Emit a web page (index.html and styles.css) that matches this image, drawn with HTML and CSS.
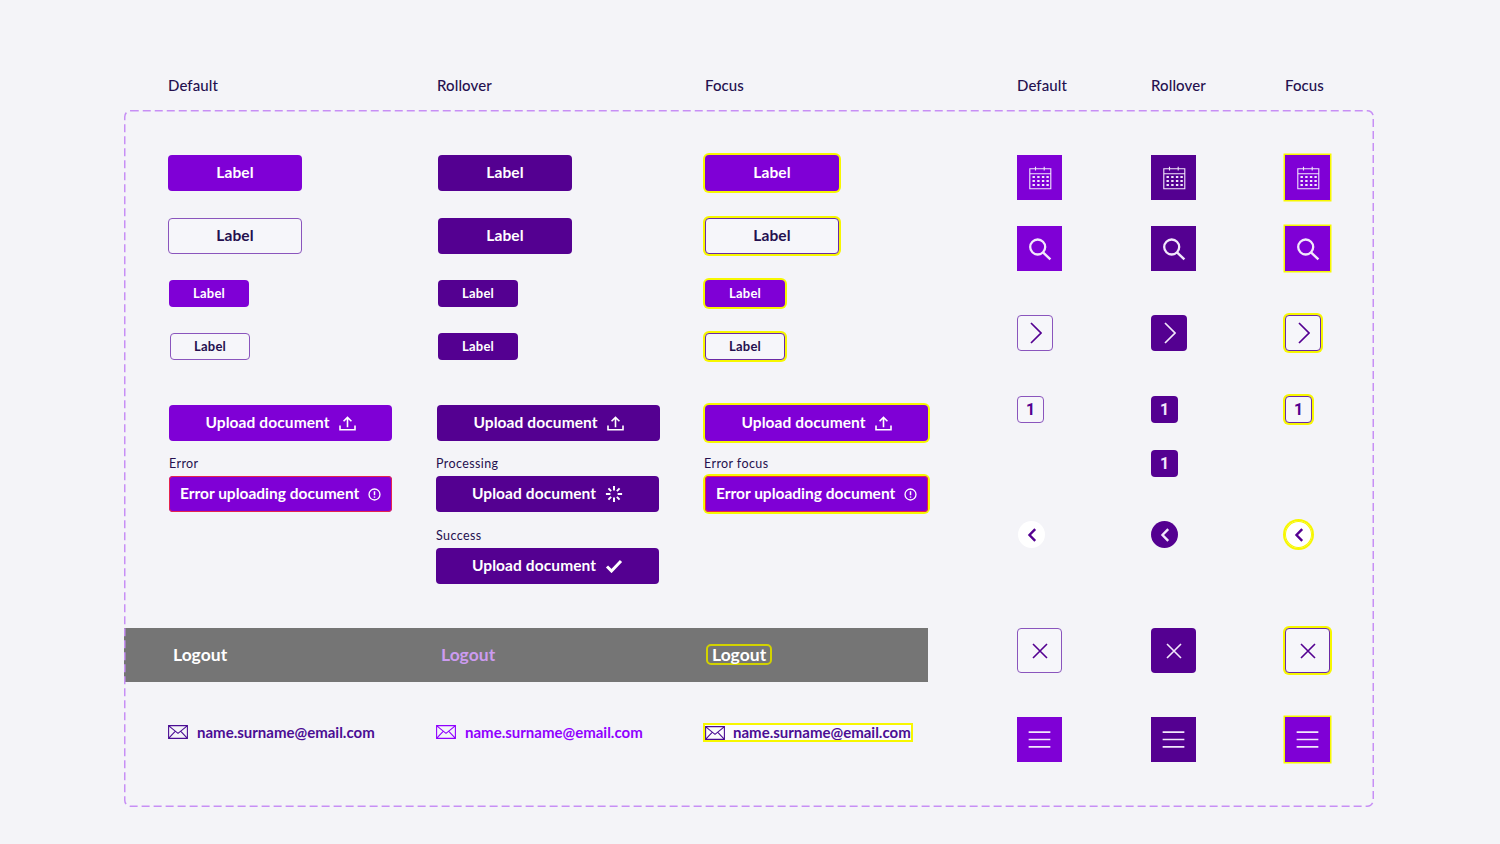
FILE: index.html
```html
<!DOCTYPE html>
<html lang="en">
<head>
<meta charset="utf-8">
<title>Button states</title>
<link rel="stylesheet" href="styles.css">
</head>
<body>
<svg class="sprite" aria-hidden="true">
  <symbol id="i-upload" viewBox="0 0 18 16"><path d="M1 10v4.6h16V10M9 12V1.6M4.8 5.6 9 1.4l4.2 4.2" fill="none" stroke="currentColor" stroke-width="1.7"/></symbol>
  <symbol id="i-info" viewBox="0 0 14 14"><circle cx="7" cy="7" r="5.9" fill="none" stroke="currentColor" stroke-width="1.4"/><path d="M7 3.6v4.2M7 9.2v1.3" fill="none" stroke="currentColor" stroke-width="1.6"/></symbol>
  <symbol id="i-spin" viewBox="0 0 20 20"><path d="M10 1v5M10 14v5M1 10h5M14 10h5M3.8 3.8l3 3M13.2 13.2l3 3M16.2 3.8l-3 3M6.8 13.2l-3 3" fill="none" stroke="currentColor" stroke-width="2.2"/></symbol>
  <symbol id="i-check" viewBox="0 0 18 14"><path d="M2 7.5 6.5 12 16 2" fill="none" stroke="currentColor" stroke-width="3"/></symbol>
  <symbol id="i-cal" viewBox="0 0 24 24"><path d="M1.8 2.8h21v20h-21zM1.8 7.8h21M7.5 .8v3.8M16.2 .8v3.8" fill="none" stroke="currentColor" stroke-width="1.1"/><path d="M4.5 10h2.4v2H4.5zM9.2 10h2.4v2H9.2zM13.9 10h2.4v2h-2.4zM18.4 10h2.4v2h-2.4zM4.5 14h2.4v2H4.5zM9.2 14h2.4v2H9.2zM13.9 14h2.4v2h-2.4zM18.4 14h2.4v2h-2.4zM4.5 18h2.4v2H4.5zM9.2 18h2.4v2H9.2zM13.9 18h2.4v2h-2.4zM18.4 18h2.4v2h-2.4z" fill="currentColor"/></symbol>
  <symbol id="i-search" viewBox="0 0 24 24"><circle cx="9.7" cy="10" r="7.5" fill="none" stroke="currentColor" stroke-width="2.3"/><path d="m15 15.4 7.4 7" fill="none" stroke="currentColor" stroke-width="2.4"/></symbol>
  <symbol id="i-next" viewBox="0 0 12 22"><path d="M1 1l10 10L1 21" fill="none" stroke="currentColor" stroke-width="1.7"/></symbol>
  <symbol id="i-prev" viewBox="0 0 10 14"><path d="M8.2 1.2 2.5 7l5.7 5.8" fill="none" stroke="currentColor" stroke-width="2.4"/></symbol>
  <symbol id="i-close" viewBox="0 0 16 16"><path d="M1 1l14 14M15 1 1 15" fill="none" stroke="currentColor" stroke-width="1.6"/></symbol>
  <symbol id="i-menu" viewBox="0 0 24 18"><path d="M.5 1.2h23M.5 9h23M.5 16.8h23" fill="none" stroke="currentColor" stroke-width="1.8"/></symbol>
  <symbol id="i-mail" viewBox="0 0 20 14"><path d="M.6.6h18.8v12.8H.6zM.8.8 10 8.4 19.2.8M.8 13.2l6.6-7M19.2 13.2l-6.6-7" fill="none" stroke="currentColor" stroke-width="1.1"/></symbol>
</svg>

<main class="page">
  <header class="heads">
    <div class="heads-left">
      <span>Default</span><span class="head-2">Rollover</span><span class="head-3">Focus</span>
    </div>
    <div class="heads-right">
      <span>Default</span><span>Rollover</span><span>Focus</span>
    </div>
  </header>

  <section class="frame">
    <svg class="dash" width="1250" height="697" aria-hidden="true"><rect x="0.75" y="0.75" width="1248.5" height="695.5" rx="6" fill="none" stroke="#c78ff5" stroke-width="1.5" stroke-dasharray="8 4"/></svg>

    <div class="left">
      <div class="states">
        <div><button class="btn lg solid">Label</button></div>
        <div class="c2"><button class="btn lg dark">Label</button></div>
        <div class="c3"><button class="btn lg solid focus">Label</button></div>

        <div><button class="btn lg line">Label</button></div>
        <div class="c2"><button class="btn lg dark">Label</button></div>
        <div class="c3"><button class="btn lg line focus">Label</button></div>

        <div class="nudge1"><button class="btn sm solid">Label</button></div>
        <div class="c2"><button class="btn sm dark">Label</button></div>
        <div class="c3"><button class="btn sm solid focus">Label</button></div>

        <div class="nudge2"><button class="btn sm line">Label</button></div>
        <div class="c2"><button class="btn sm dark">Label</button></div>
        <div class="c3"><button class="btn sm line focus">Label</button></div>

        <div class="nudge1"><button class="btn wide solid">Upload document <svg class="ic up"><use href="#i-upload"/></svg></button></div>
        <div class="up-2"><button class="btn wide dark">Upload document <svg class="ic up"><use href="#i-upload"/></svg></button></div>
        <div class="c3"><button class="btn wide solid focus">Upload document <svg class="ic up"><use href="#i-upload"/></svg></button></div>

        <div class="group nudge1"><p class="cap">Error</p><button class="btn wide solid err">Error uploading document <svg class="ic info"><use href="#i-info"/></svg></button></div>
        <div class="group"><p class="cap">Processing</p><button class="btn wide dark">Upload document <svg class="ic spin"><use href="#i-spin"/></svg></button></div>
        <div class="group c3"><p class="cap cap-back">Error focus</p><button class="btn wide solid err focus">Error uploading document <svg class="ic info"><use href="#i-info"/></svg></button></div>

        <div></div>
        <div class="group"><p class="cap">Success</p><button class="btn wide dark">Upload document <svg class="ic check"><use href="#i-check"/></svg></button></div>
        <div></div>
      </div>

      <div class="bar">
        <a class="logout">Logout</a>
        <a class="logout hover">Logout</a>
        <a class="logout ring">Logout</a>
      </div>

      <div class="mails">
        <a class="mail"><svg class="ic env"><use href="#i-mail"/></svg>name.surname@email.com</a>
        <a class="mail hover"><svg class="ic env"><use href="#i-mail"/></svg>name.surname@email.com</a>
        <a class="mail ring"><svg class="ic env"><use href="#i-mail"/></svg>name.surname@email.com</a>
      </div>
    </div>

    <div class="right">
      <button class="sq s45 solid"><svg class="ic cal"><use href="#i-cal"/></svg></button>
      <button class="sq s45 dark"><svg class="ic cal"><use href="#i-cal"/></svg></button>
      <button class="sq s45 solid focus"><svg class="ic cal"><use href="#i-cal"/></svg></button>

      <button class="sq s45 solid"><svg class="ic cal"><use href="#i-search"/></svg></button>
      <button class="sq s45 dark"><svg class="ic cal"><use href="#i-search"/></svg></button>
      <button class="sq s45 solid focus"><svg class="ic cal"><use href="#i-search"/></svg></button>

      <button class="sq s36 round line"><svg class="ic nxt"><use href="#i-next"/></svg></button>
      <button class="sq s36 round dark"><svg class="ic nxt"><use href="#i-next"/></svg></button>
      <button class="sq s36 round line focus"><svg class="ic nxt"><use href="#i-next"/></svg></button>

      <button class="sq s27 round line num">1</button>
      <button class="sq s27 round dark num">1</button>
      <button class="sq s27 round line num focus">1</button>

      <div></div>
      <button class="sq s27 round dark num">1</button>
      <div></div>

      <button class="sq s27 circle nudge-c"><svg class="ic prv"><use href="#i-prev"/></svg></button>
      <button class="sq s27 circle dark"><svg class="ic prv"><use href="#i-prev"/></svg></button>
      <button class="sq s27 circle focus"><svg class="ic prv"><use href="#i-prev"/></svg></button>

      <button class="sq s45 round line"><svg class="ic cls"><use href="#i-close"/></svg></button>
      <button class="sq s45 round dark"><svg class="ic cls"><use href="#i-close"/></svg></button>
      <button class="sq s45 round line focus"><svg class="ic cls"><use href="#i-close"/></svg></button>

      <button class="sq s45 solid"><svg class="ic hamb"><use href="#i-menu"/></svg></button>
      <button class="sq s45 dark"><svg class="ic hamb"><use href="#i-menu"/></svg></button>
      <button class="sq s45 solid focus"><svg class="ic hamb"><use href="#i-menu"/></svg></button>
    </div>
  </section>
</main>
</body>
</html>
```

FILE: styles.css
```css
* { box-sizing: border-box; }
html, body { margin: 0; height: 100%; }
body {
  background: #f4f4f8;
  color: #25104f;
  font-family: "Lato", "Liberation Sans", sans-serif;
  overflow: hidden;
}
.sprite { display: none; }
.page { padding: 75px 0 0 124px; }

.heads { display: flex; height: 35px; font-size: 15px; line-height: 20px; letter-spacing: .1px; font-weight: 500; }
.heads-left { width: 893px; padding-left: 44px; display: grid; grid-template-columns: 269px 268px 1fr; }
.heads-right { display: grid; grid-template-columns: repeat(3, 134px); }

.frame { position: relative; display: flex; width: 1250px; height: 697px; }
.dash { position: absolute; left: 0; top: 0; pointer-events: none; }

.left { width: 804px; }
.states {
  display: grid;
  grid-template-columns: 268px 268px 1fr;
  grid-template-rows: 63px 62px 53px 72px 50px 72px 101px;
  padding: 45px 0 0 44px;
  height: 518px;
}
.c2 { padding-left: 2px; }
.c3 { padding-left: 1px; }
.up-2 { padding-left: 1px; }
.nudge1 { padding-left: 1px; }
.nudge2 { padding-left: 2px; }

button { font-family: inherit; border: 0; padding: 0; cursor: pointer; }
.btn {
  display: inline-flex; align-items: center; justify-content: center;
  font-weight: 700; border-radius: 4px; letter-spacing: .1px; padding-bottom: 2px;
}
.lg { width: 134px; height: 36px; font-size: 15.5px; }
.sm { width: 80px; height: 27px; font-size: 13px; letter-spacing: .2px; }
.wide { width: 223px; height: 36px; font-size: 15.5px; white-space: pre; }
.solid { background: #7f00d6; color: #fff; }
.dark { background: #540091; color: #fff; }
.line { background: #f6f6fa; color: #25104f; border: 1.5px solid #8a55bd; }
.err { box-shadow: inset 0 0 0 1px #e5244f; letter-spacing: 0; }
.focus { box-shadow: 0 0 0 2px #f7f700; }
.line.focus { border-color: #6a2aa5; }
.err.focus { box-shadow: inset 0 0 0 1px #e5244f, 0 0 0 2px #f7f700; }

.ic { display: block; flex: none; }
.up { width: 17px; height: 15px; margin: 2px 0 0 5px; }
.info { width: 13px; height: 13px; margin: 2px 0 0 5px; }
.spin { width: 18px; height: 18px; margin: 2px 0 0 5px; }
.check { width: 18px; height: 14px; margin: 2px 0 0 5px; }

.cap { margin: 0 0 4px; height: 17px; font-size: 12.5px; line-height: 18px; letter-spacing: .4px; }
.cap-back { margin-left: -1px; }

.bar {
  display: grid; grid-template-columns: 268px 268px 1fr;
  align-items: center; height: 54px; background: #757575;
  padding: 0 0 1px 49px; font-size: 17.5px; font-weight: 700;
}
.logout { color: #fff; justify-self: start; }
.logout.hover { color: #cc9bf0; }
.logout.ring { margin-left: -3px; padding: 0 4px; line-height: 17px; border: 2px solid #d2d200; border-radius: 5px; }

.mails {
  display: grid; grid-template-columns: 268px 268px 1fr;
  padding: 40px 0 0 44px; font-size: 15px; font-weight: 700;
}
.mail { display: flex; align-items: center; height: 20px; padding-bottom: 1px; color: #4b0d94; justify-self: start; }
.env { width: 20px; height: 14px; margin: 1px 9px 0 0; }
.mail.hover { color: #9000ff; }
.mail.ring { margin: 1px 0 0 -1px; height: 19px; padding: 0 2px 1px 2px; background: #fbfbfd; outline: 2px solid #f7f700; outline-offset: -2px; color: #4b0d94; }
.ring .env { margin-right: 8px; }

.right {
  display: grid; align-content: start;
  grid-template-columns: repeat(3, 134px);
  grid-template-rows: 71px 89px 81px 54px 71px 107px 89px 45px;
  padding: 45px 0 0 89px;
}
.sq { display: flex; align-items: center; justify-content: center; }
.s45 { width: 45px; height: 45px; }
.s36 { width: 36px; height: 36px; }
.s27 { width: 27px; height: 27px; }
.round { border-radius: 4px; }
.circle { border-radius: 50%; background: #fff; color: #540091; }
.circle.dark { background: #540091; color: #fff; }
.circle.focus { box-shadow: inset 0 0 0 1px #f7f700, 0 0 0 2px #f7f700; }
.nudge-c { margin-left: 1px; }
.num { font-family: "Roboto", "Lato", sans-serif; font-size: 16px; font-weight: 700; padding-bottom: 1px; }
.cal { width: 24px; height: 24px; }
.nxt { width: 12px; height: 22px; margin-left: 2px; }
.prv { width: 10px; height: 14px; }
.cls { width: 16px; height: 16px; }
.hamb { width: 23px; height: 17px; }
.sq.line { color: #540091; }
.sq.solid, .sq.dark { color: #f2e8fb; }
.sq.solid.focus { box-shadow: 0 0 0 1.5px #f7f700; }
```
